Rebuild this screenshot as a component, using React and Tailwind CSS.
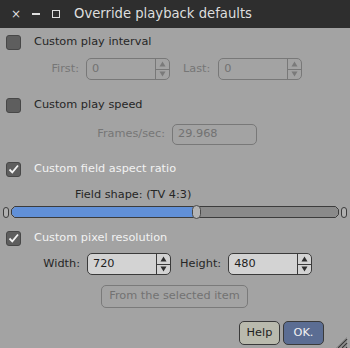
const font = { fontFamily: '"DejaVu Sans", sans-serif' };

function Check({ checked }) {
  return (
    <div className="w-[15px] h-[15px] shrink-0 rounded-[3px] bg-[#5e5e5e] border border-[#474747] flex items-center justify-center">
      {checked && (
        <svg width="11" height="11" viewBox="0 0 11 11">
          <path d="M1.5 5.5 L4.3 8.3 L10 1.5" fill="none" stroke="#f4f4f4" strokeWidth="1.8" />
        </svg>
      )}
    </div>
  );
}

function Spin({ value, disabled, w }) {
  const border = disabled ? "border-[#787878]" : "border-[#3a3a3a]";
  const arrow = disabled ? "#7a7a7a" : "#2e2e2e";
  return (
    <div
      className={`h-[22px] ${w} flex rounded-[5px] border ${border} ${
        disabled ? "bg-[#a3a3a3]" : "bg-[#d3d3d3]"
      }`}
    >
      <div
        className={`flex-1 flex items-center pl-[5px] text-[11.3px] ${
          disabled ? "text-[#727272]" : "text-[#1e1e1e]"
        }`}
      >
        {value}
      </div>
      <div className={`w-[14px] flex flex-col border-l ${border}`}>
        <div className={`flex-1 flex items-center justify-center border-b ${border}`}>
          <svg width="7" height="6" viewBox="0 0 7 6">
            <path d="M3.5 0.5 L6.5 5.5 L0.5 5.5 Z" fill={arrow} />
          </svg>
        </div>
        <div className="flex-1 flex items-center justify-center">
          <svg width="7" height="6" viewBox="0 0 7 6">
            <path d="M0.5 0.5 L6.5 0.5 L3.5 5.5 Z" fill={arrow} />
          </svg>
        </div>
      </div>
    </div>
  );
}

export default function App() {
  return (
    <div className="w-[350px] h-[348px] bg-[#a3a3a3] flex flex-col overflow-hidden" style={font}>
      {/* title bar */}
      <div className="h-[28px] bg-[#2e2e2e] flex items-center text-[#dedede] shrink-0">
        <span className="ml-[11px] w-[7px] text-[12px] leading-none">×</span>
        <div className="ml-[14px] w-[8px] h-[1.5px] bg-[#dedede]" />
        <div className="ml-[12px] w-[8px] h-[8px] border-[1.5px] border-[#dedede]" />
        <span className="ml-[14px] text-[13.2px]">Override playback defaults</span>
      </div>

      {/* play interval */}
      <div className="mt-[7px] h-[15px] flex items-center pl-[6px]">
        <Check />
        <span className="ml-[13px] text-[11.3px] text-[#262626]">Custom play interval</span>
      </div>
      <div className="mt-[8px] flex items-center">
        <span className="w-[79px] text-right text-[11.3px] text-[#767676]">First:</span>
        <div className="ml-[7px]">
          <Spin value="0" disabled w="w-[84px]" />
        </div>
        <span className="ml-[13px] text-[11.3px] text-[#767676]">Last:</span>
        <div className="ml-[8px]">
          <Spin value="0" disabled w="w-[84px]" />
        </div>
      </div>

      {/* play speed */}
      <div className="mt-[18px] h-[15px] flex items-center pl-[6px]">
        <Check />
        <span className="ml-[13px] text-[11.3px] text-[#262626]">Custom play speed</span>
      </div>
      <div className="mt-[11px] flex items-center">
        <span className="w-[165px] text-right text-[11.3px] text-[#767676]">Frames/sec:</span>
        <div className="ml-[7px] h-[21px] w-[85px] rounded-[5px] border border-[#787878] flex items-center pl-[5px] text-[11.3px] text-[#727272]">
          29.968
        </div>
      </div>

      {/* field aspect */}
      <div className="mt-[17px] h-[15px] flex items-center pl-[6px]">
        <Check checked />
        <span className="ml-[13px] text-[11.3px] text-[#f2f2f2]">Custom field aspect ratio</span>
      </div>
      <div className="mt-[11px] h-[14px] flex items-center pl-[75px] text-[11.3px] text-[#262626]">
        Field shape: (TV 4:3)
      </div>
      <div className="mt-[3px] h-[14px] flex items-center">
        <div className="ml-[3px] w-[6px] h-[11px] rounded-full border border-[#3c3c3c] bg-[#b0b0b0]" />
        <div className="ml-[2px] relative w-[328px] h-[12px]">
          <svg width="328" height="12" viewBox="0 0 328 12" className="block">
            <path d="M3.5 0.5 L324.5 0.5 L327.5 3.5 L327.5 8.5 L324.5 11.5 L3.5 11.5 L0.5 8.5 L0.5 3.5 Z" fill="#8a8a8a" stroke="#3c3c3c" />
            <path d="M4 1 L186 1 L186 11 L4 11 L1 8.3 L1 3.7 Z" fill="#6190d8" />
          </svg>
          <div className="absolute left-[181px] top-[-1px] w-[9px] h-[14px] rounded-full border border-[#4a4a4a] bg-[#b4b4b4]" />
        </div>
        <div className="ml-[2px] w-[6px] h-[11px] rounded-full border border-[#3c3c3c] bg-[#b0b0b0]" />
      </div>

      {/* pixel resolution */}
      <div className="mt-[12px] h-[15px] flex items-center pl-[6px]">
        <Check checked />
        <span className="ml-[13px] text-[11.3px] text-[#f2f2f2]">Custom pixel resolution</span>
      </div>
      <div className="mt-[7px] flex items-center">
        <span className="w-[80px] text-right text-[11.3px] text-[#262626]">Width:</span>
        <div className="ml-[7px]">
          <Spin value="720" w="w-[84px]" />
        </div>
        <span className="ml-[9px] text-[11.3px] text-[#262626]">Height:</span>
        <div className="ml-[7px]">
          <Spin value="480" w="w-[84px]" />
        </div>
      </div>
      <div className="mt-[10px] pl-[101px]">
        <div className="w-[147px] h-[23px] rounded-[5px] border border-[#7a7a7a] flex items-center justify-center text-[11.3px] text-[#727272]">
          From the selected item
        </div>
      </div>

      {/* buttons */}
      <div className="mt-[13px] flex items-end">
        <div className="ml-[239px] w-[41px] h-[24px] rounded-[5px] border border-[#3a3a3a] bg-[#b9baad] flex items-center justify-center text-[11.3px] text-[#1e1e1e]">
          Help
        </div>
        <div className="ml-[3px] w-[41px] h-[24px] rounded-[5px] border border-[#3a3a3a] bg-[#5b6d93] flex items-center justify-center text-[11.3px] text-[#f2f2f2]">
          OK.
        </div>
        <svg width="13" height="13" viewBox="0 0 13 13" className="ml-[11px] mb-[-4px]">
          <path d="M12 3 L3 12 M12 7 L7 12 M12 11 L11 12" stroke="#3a3a3a" strokeWidth="1.3" />
          <path d="M12 1 L1 12 M12 5 L5 12 M12 9 L9 12" stroke="#8a8a8a" strokeWidth="0.8" />
        </svg>
      </div>
    </div>
  );
}
